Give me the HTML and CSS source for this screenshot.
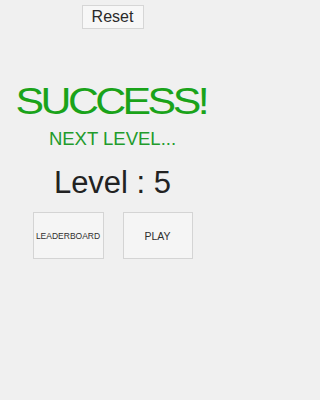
FILE: index.html
```html
<!DOCTYPE html>
<html>
<head>
<meta charset="utf-8">
<link rel="stylesheet" href="styles.css">
</head>
<body>
<div class="screen">
  <div class="reset">Reset</div>
  <div class="success">SUCCESS!</div>
  <div class="next">NEXT LEVEL...</div>
  <div class="level">Level : 5</div>
  <div class="buttons">
    <div class="btn btn-lb">LEADERBOARD</div>
    <div class="btn btn-play">PLAY</div>
  </div>
</div>
</body>
</html>
```
FILE: styles.css
```css
html, body {
  margin: 0;
  padding: 0;
  background: #f0f0f0;
}
body {
  width: 225px;
  height: 400px;
  overflow: hidden;
  font-family: "Liberation Sans", Arial, sans-serif;
}
.screen {
  display: flex;
  flex-direction: column;
  align-items: center;
  padding-top: 5px;
}
.reset {
  box-sizing: border-box;
  width: 62px;
  height: 24px;
  border: 1px solid #d6d6d6;
  background: #f7f7f7;
  color: #2a2a2a;
  font-size: 16px;
  line-height: 22px;
  text-align: center;
}
.success {
  margin-top: 55px;
  font-size: 36px;
  line-height: 36px;
  height: 36px;
  color: #1aa31a;
  letter-spacing: -3px;
  transform: scaleX(1.19);
  white-space: nowrap;
  padding-right: 3px;
}
.next {
  margin-top: 10px;
  font-size: 18.5px;
  line-height: 18px;
  color: #229b2c;
  white-space: nowrap;
}
.level {
  margin-top: 19px;
  font-size: 31px;
  line-height: 31px;
  color: #222222;
  white-space: nowrap;
}
.buttons {
  margin-top: 14px;
  display: flex;
  gap: 19px;
}
.btn {
  box-sizing: border-box;
  height: 47px;
  border: 1px solid #d4d4d4;
  background: #f5f5f5;
  color: #2e2e2e;
  display: flex;
  align-items: center;
  justify-content: center;
  white-space: nowrap;
  overflow: hidden;
}
.btn-lb {
  width: 71px;
  font-size: 8.5px;
}
.btn-play {
  width: 70px;
  font-size: 10.5px;
}
```
